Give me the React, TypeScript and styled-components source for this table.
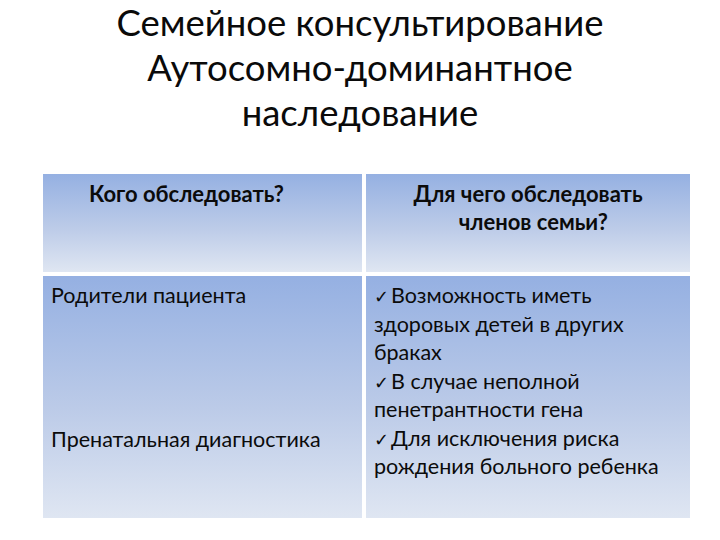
import React from "react";
import styled, { createGlobalStyle } from "styled-components";

const GlobalStyle = createGlobalStyle`
  html, body {
    margin: 0;
    padding: 0;
    background: #ffffff;
  }
  body {
    font-family: Lato, "Open Sans", "Noto Sans", sans-serif;
    color: #000000;
  }
`;

const Slide = styled.div`
  width: 720px;
  height: 540px;
  display: flex;
  flex-direction: column;
  overflow: hidden;
`;

const Title = styled.h1`
  margin: 0;
  text-align: center;
  font-size: 36.5px;
  font-weight: 400;
  line-height: 45px;
  color: #0a0a0a;
`;

const Table = styled.div`
  margin: 39px 0 0 43px;
  width: 647px;
  display: grid;
  grid-template-columns: 319px 324px;
  grid-template-rows: 98px 242px;
  gap: 4px;
`;

const Cell = styled.div<{ $head?: boolean }>`
  background: linear-gradient(180deg, #95b0e2 0%, #bccbe8 55%, #dfe6f2 100%);
  box-sizing: border-box;
  padding: ${(p) => (p.$head ? "6px 6px" : "5px 8px")};
  font-size: ${(p) => (p.$head ? "22px" : "21.5px")};
  line-height: ${(p) => (p.$head ? "27.5px" : "28.5px")};
  font-weight: ${(p) => (p.$head ? 700 : 400)};
  color: #0b0b0b;
`;

const HeadText = styled.div<{ $indent?: number }>`
  padding-left: ${(p) => p.$indent ?? 0}px;
  text-align: ${(p) => (p.$indent === undefined ? "center" : "left")};
`;

const Para = styled.p<{ $gap?: number }>`
  margin: ${(p) => p.$gap ?? 0}px 0 0;
`;

const Check = styled.span`
  font-family: "DejaVu Sans", sans-serif;
  font-size: 18px;
  line-height: 0;
  margin-right: 2px;
`;

export default function App() {
  return (
    <>
      <GlobalStyle />
      <Slide>
        <Title>
          Семейное консультирование
          <br />
          Аутосомно-доминантное
          <br />
          наследование
        </Title>
        <Table>
          <Cell $head>
            <HeadText $indent={40}>Кого обследовать?</HeadText>
          </Cell>
          <Cell $head>
            <HeadText>
              Для чего обследовать
              <br />
              &nbsp;&nbsp;членов семьи?
            </HeadText>
          </Cell>
          <Cell>
            <Para>Родители пациента</Para>
            <Para $gap={115}>Пренатальная диагностика</Para>
          </Cell>
          <Cell>
            <Para>
              <Check>✓</Check>Возможность иметь здоровых детей в других
              браках
            </Para>
            <Para>
              <Check>✓</Check>В случае неполной пенетрантности гена
            </Para>
            <Para>
              <Check>✓</Check>Для исключения риска рождения больного ребенка
            </Para>
          </Cell>
        </Table>
      </Slide>
    </>
  );
}
